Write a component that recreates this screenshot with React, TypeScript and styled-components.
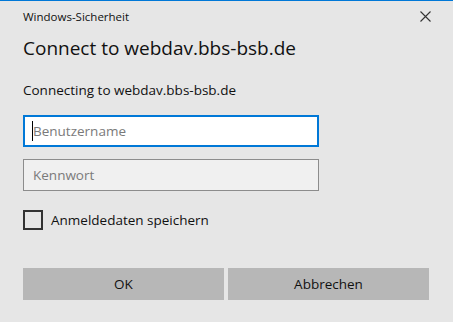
import { FC } from "react";
import styled, { createGlobalStyle } from "styled-components";

const GlobalStyle = createGlobalStyle`
  html, body {
    margin: 0;
    padding: 0;
    background: #e6e6e6;
  }
  * {
    box-sizing: border-box;
  }
`;

const Dialog = styled.div`
  width: 453px;
  height: 322px;
  background: #e6e6e6;
  border-top: 1px solid #0078d7;
  font-family: "Open Sans", "Noto Sans", sans-serif;
  color: #000;
  padding: 0 23px;
  display: flex;
  flex-direction: column;
`;

const TitleBar = styled.div`
  display: flex;
  align-items: center;
  justify-content: space-between;
  height: 30px;
  padding-top: 1px;
`;

const TitleText = styled.span`
  font-size: 11.5px;
  color: #111;
`;

const CloseButton = styled.button`
  border: 0;
  background: transparent;
  padding: 0;
  width: 12px;
  height: 12px;
  margin-right: -1px;
  display: flex;
  align-items: center;
  justify-content: center;
  cursor: pointer;
`;

const Heading = styled.h1`
  margin: 4px 0 0;
  font-size: 19px;
  font-weight: 400;
  line-height: 26px;
  color: #111;
`;

const Subtitle = styled.p`
  margin: 19px 0 0;
  font-size: 13.5px;
  line-height: 20px;
  color: #111;
`;

const Field = styled.div<{ $focused?: boolean }>`
  position: relative;
  margin-top: ${(p) => (p.$focused ? "15px" : "12px")};
  width: 296px;
  height: 32px;
  ${(p) =>
    p.$focused &&
    `
    &::before {
      content: "";
      position: absolute;
      left: 9px;
      top: 6px;
      width: 1px;
      height: 20px;
      background: #000;
    }
  `}
`;

const TextInput = styled.input<{ $focused?: boolean }>`
  width: 100%;
  height: 100%;
  margin: 0;
  font-family: "Open Sans", "Noto Sans", sans-serif;
  font-size: 13.5px;
  padding: 0 0 0 ${(p) => (p.$focused ? "8px" : "9px")};
  border: ${(p) => (p.$focused ? "2px solid #0078d7" : "1px solid #8c8c8c")};
  background: ${(p) => (p.$focused ? "#ffffff" : "#f0f0f0")};
  outline: none;
  color: #000;
  caret-color: transparent;
  &::placeholder {
    color: #7a7a7a;
  }
`;

const CheckRow = styled.label`
  display: flex;
  align-items: center;
  gap: 8px;
  margin-top: 19px;
  height: 20px;
  font-size: 13.5px;
  color: #111;
  cursor: pointer;
`;

const CheckBox = styled.span`
  width: 20px;
  height: 20px;
  border: 2px solid #333333;
  background: transparent;
  flex-shrink: 0;
`;

const ButtonRow = styled.div`
  display: grid;
  grid-template-columns: 1fr 1fr;
  gap: 4px;
  margin-top: 38px;
  margin-right: 1px;
`;

const DialogButton = styled.button`
  height: 32px;
  border: 0;
  background: #b7b7b7;
  font-family: "Open Sans", "Noto Sans", sans-serif;
  font-size: 13.5px;
  color: #111;
  padding: 0;
  cursor: pointer;
`;

const CloseIcon: FC = () => (
  <svg width="11" height="11" viewBox="0 0 11 11">
    <path d="M0.5 0.5 L10.5 10.5 M10.5 0.5 L0.5 10.5" stroke="#333" strokeWidth="1.1" fill="none" />
  </svg>
);

const App: FC = () => {
  return (
    <>
      <GlobalStyle />
      <Dialog>
        <TitleBar>
          <TitleText>Windows-Sicherheit</TitleText>
          <CloseButton aria-label="Schließen">
            <CloseIcon />
          </CloseButton>
        </TitleBar>
        <Heading>Connect to webdav.bbs-bsb.de</Heading>
        <Subtitle>Connecting to webdav.bbs-bsb.de</Subtitle>
        <Field $focused>
          <TextInput $focused placeholder="Benutzername" />
        </Field>
        <Field>
          <TextInput type="password" placeholder="Kennwort" />
        </Field>
        <CheckRow>
          <CheckBox />
          Anmeldedaten speichern
        </CheckRow>
        <ButtonRow>
          <DialogButton>OK</DialogButton>
          <DialogButton>Abbrechen</DialogButton>
        </ButtonRow>
      </Dialog>
    </>
  );
};

export default App;
